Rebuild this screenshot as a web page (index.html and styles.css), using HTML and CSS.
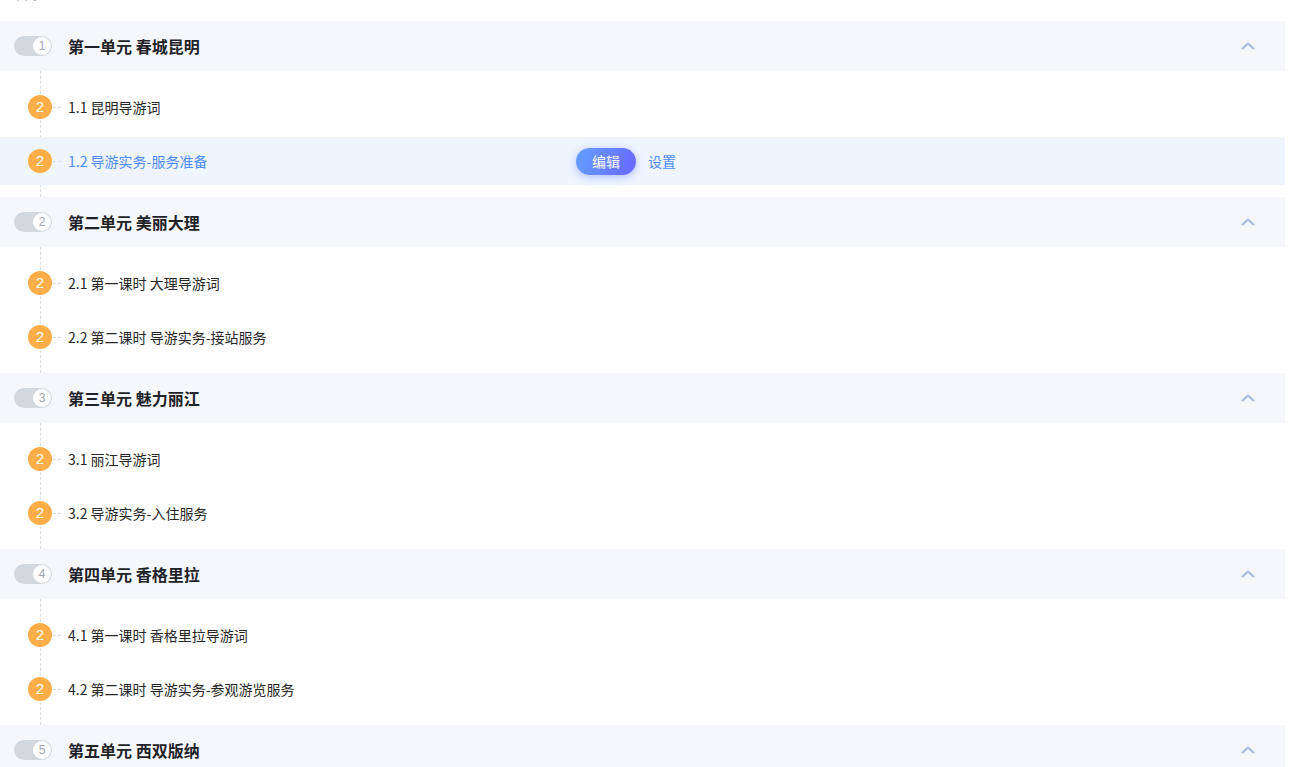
FILE: index.html
```html
<!DOCTYPE html>
<html lang="zh-CN">
<head>
  <meta charset="UTF-8">
  <meta name="viewport" content="width=device-width, initial-scale=1.0">
  <title>课程目录</title>
  <link rel="stylesheet" href="styles.css">
</head>
<body>

<div class="catalog">
  <div class="catalog-head"><span>目录</span></div>

  <div class="unit">
    <div class="unit-head">
      <span class="toggle"><span class="knob">1</span></span>
      <span class="unit-title">第一单元 春城昆明</span>
      <svg class="chevron" width="14" height="8" viewBox="0 0 14 8"><path d="M1 7 L7 1.5 L13 7" fill="none" stroke="#a5bbdd" stroke-width="2"/></svg>
    </div>
    <div class="lessons">
      <div class="lesson"><span class="badge">2</span><span class="dash"></span><span class="lesson-title">1.1 昆明导游词</span></div>
      <div class="lesson active"><span class="badge">2</span><span class="dash"></span><span class="lesson-title">1.2 导游实务-服务准备</span><button class="btn-edit">编辑</button><a class="link-set">设置</a></div>
    </div>
  </div>

  <div class="unit">
    <div class="unit-head">
      <span class="toggle"><span class="knob">2</span></span>
      <span class="unit-title">第二单元 美丽大理</span>
      <svg class="chevron" width="14" height="8" viewBox="0 0 14 8"><path d="M1 7 L7 1.5 L13 7" fill="none" stroke="#a5bbdd" stroke-width="2"/></svg>
    </div>
    <div class="lessons">
      <div class="lesson"><span class="badge">2</span><span class="dash"></span><span class="lesson-title">2.1 第一课时 大理导游词</span></div>
      <div class="lesson"><span class="badge">2</span><span class="dash"></span><span class="lesson-title">2.2 第二课时 导游实务-接站服务</span></div>
    </div>
  </div>

  <div class="unit">
    <div class="unit-head">
      <span class="toggle"><span class="knob">3</span></span>
      <span class="unit-title">第三单元 魅力丽江</span>
      <svg class="chevron" width="14" height="8" viewBox="0 0 14 8"><path d="M1 7 L7 1.5 L13 7" fill="none" stroke="#a5bbdd" stroke-width="2"/></svg>
    </div>
    <div class="lessons">
      <div class="lesson"><span class="badge">2</span><span class="dash"></span><span class="lesson-title">3.1 丽江导游词</span></div>
      <div class="lesson"><span class="badge">2</span><span class="dash"></span><span class="lesson-title">3.2 导游实务-入住服务</span></div>
    </div>
  </div>

  <div class="unit">
    <div class="unit-head">
      <span class="toggle"><span class="knob">4</span></span>
      <span class="unit-title">第四单元 香格里拉</span>
      <svg class="chevron" width="14" height="8" viewBox="0 0 14 8"><path d="M1 7 L7 1.5 L13 7" fill="none" stroke="#a5bbdd" stroke-width="2"/></svg>
    </div>
    <div class="lessons">
      <div class="lesson"><span class="badge">2</span><span class="dash"></span><span class="lesson-title">4.1 第一课时 香格里拉导游词</span></div>
      <div class="lesson"><span class="badge">2</span><span class="dash"></span><span class="lesson-title">4.2 第二课时 导游实务-参观游览服务</span></div>
    </div>
  </div>

  <div class="unit">
    <div class="unit-head">
      <span class="toggle"><span class="knob">5</span></span>
      <span class="unit-title">第五单元 西双版纳</span>
      <svg class="chevron" width="14" height="8" viewBox="0 0 14 8"><path d="M1 7 L7 1.5 L13 7" fill="none" stroke="#a5bbdd" stroke-width="2"/></svg>
    </div>
  </div>
</div>

</body>
</html>
```

FILE: styles.css
```css
body {
  margin: 0;
  background: #fff;
  font-family: "Noto Sans CJK SC", "Noto Sans", Arial, sans-serif;
  color: #262626;
  overflow: hidden;
}
.catalog {
  width: 1285px;
}
.catalog-head {
  height: 21px;
  padding-left: 15px;
  overflow: hidden;
}
.catalog-head span {
  display: block;
  margin-top: -15px;
  font-size: 14px;
  line-height: 16px;
  color: #b0b6c0;
}
.unit-head {
  height: 50px;
  display: flex;
  align-items: center;
  padding: 0 30px 0 14px;
  background: #f5f7fa;
}
.toggle {
  width: 38px;
  height: 20px;
  border-radius: 10px;
  background: #d3d7de;
  display: flex;
  align-items: center;
  justify-content: flex-end;
  padding-right: 1px;
  box-sizing: border-box;
}
.knob {
  width: 18px;
  height: 18px;
  border-radius: 50%;
  background: #fff;
  color: #9fa4ad;
  font-size: 12px;
  line-height: 18px;
  text-align: center;
  font-family: Arial, sans-serif;
}
.unit-title {
  flex: 1;
  margin-left: 16px;
  font-size: 16px;
  font-weight: bold;
  color: #1f2329;
}
.chevron {
  display: block;
}
.lessons {
  position: relative;
  padding: 12px 0;
  display: flex;
  flex-direction: column;
  gap: 6px;
}
.lessons::before {
  content: "";
  position: absolute;
  left: 40px;
  top: 0;
  bottom: 0;
  border-left: 1px dashed #d9dce2;
}
.lesson {
  position: relative;
  height: 48px;
  display: flex;
  align-items: center;
  padding-left: 28px;
  font-size: 14px;
  color: #262626;
}
.lesson.active {
  background: #eff5ff;
  color: #4d8cf5;
}
.badge {
  width: 24px;
  height: 24px;
  border-radius: 50%;
  background: #ffad47;
  color: #fff;
  font-size: 15px;
  line-height: 24px;
  text-align: center;
  font-family: Arial, sans-serif;
}
.dash {
  width: 8px;
  margin: 0 7px 0 1px;
  border-top: 1px dashed #d9dce2;
}
.lesson-title {
  width: 496px;
}
.btn-edit {
  margin-left: 12px;
  width: 60px;
  height: 27px;
  border: none;
  border-radius: 14px;
  background: linear-gradient(110deg, #62a0ff, #6a66ff);
  box-shadow: 0 2px 8px rgba(98, 120, 255, 0.45);
  color: #fff;
  font-family: inherit;
  font-size: 14px;
  cursor: pointer;
}
.link-set {
  margin-left: 12px;
  color: #4d8cf5;
  cursor: pointer;
}
```
